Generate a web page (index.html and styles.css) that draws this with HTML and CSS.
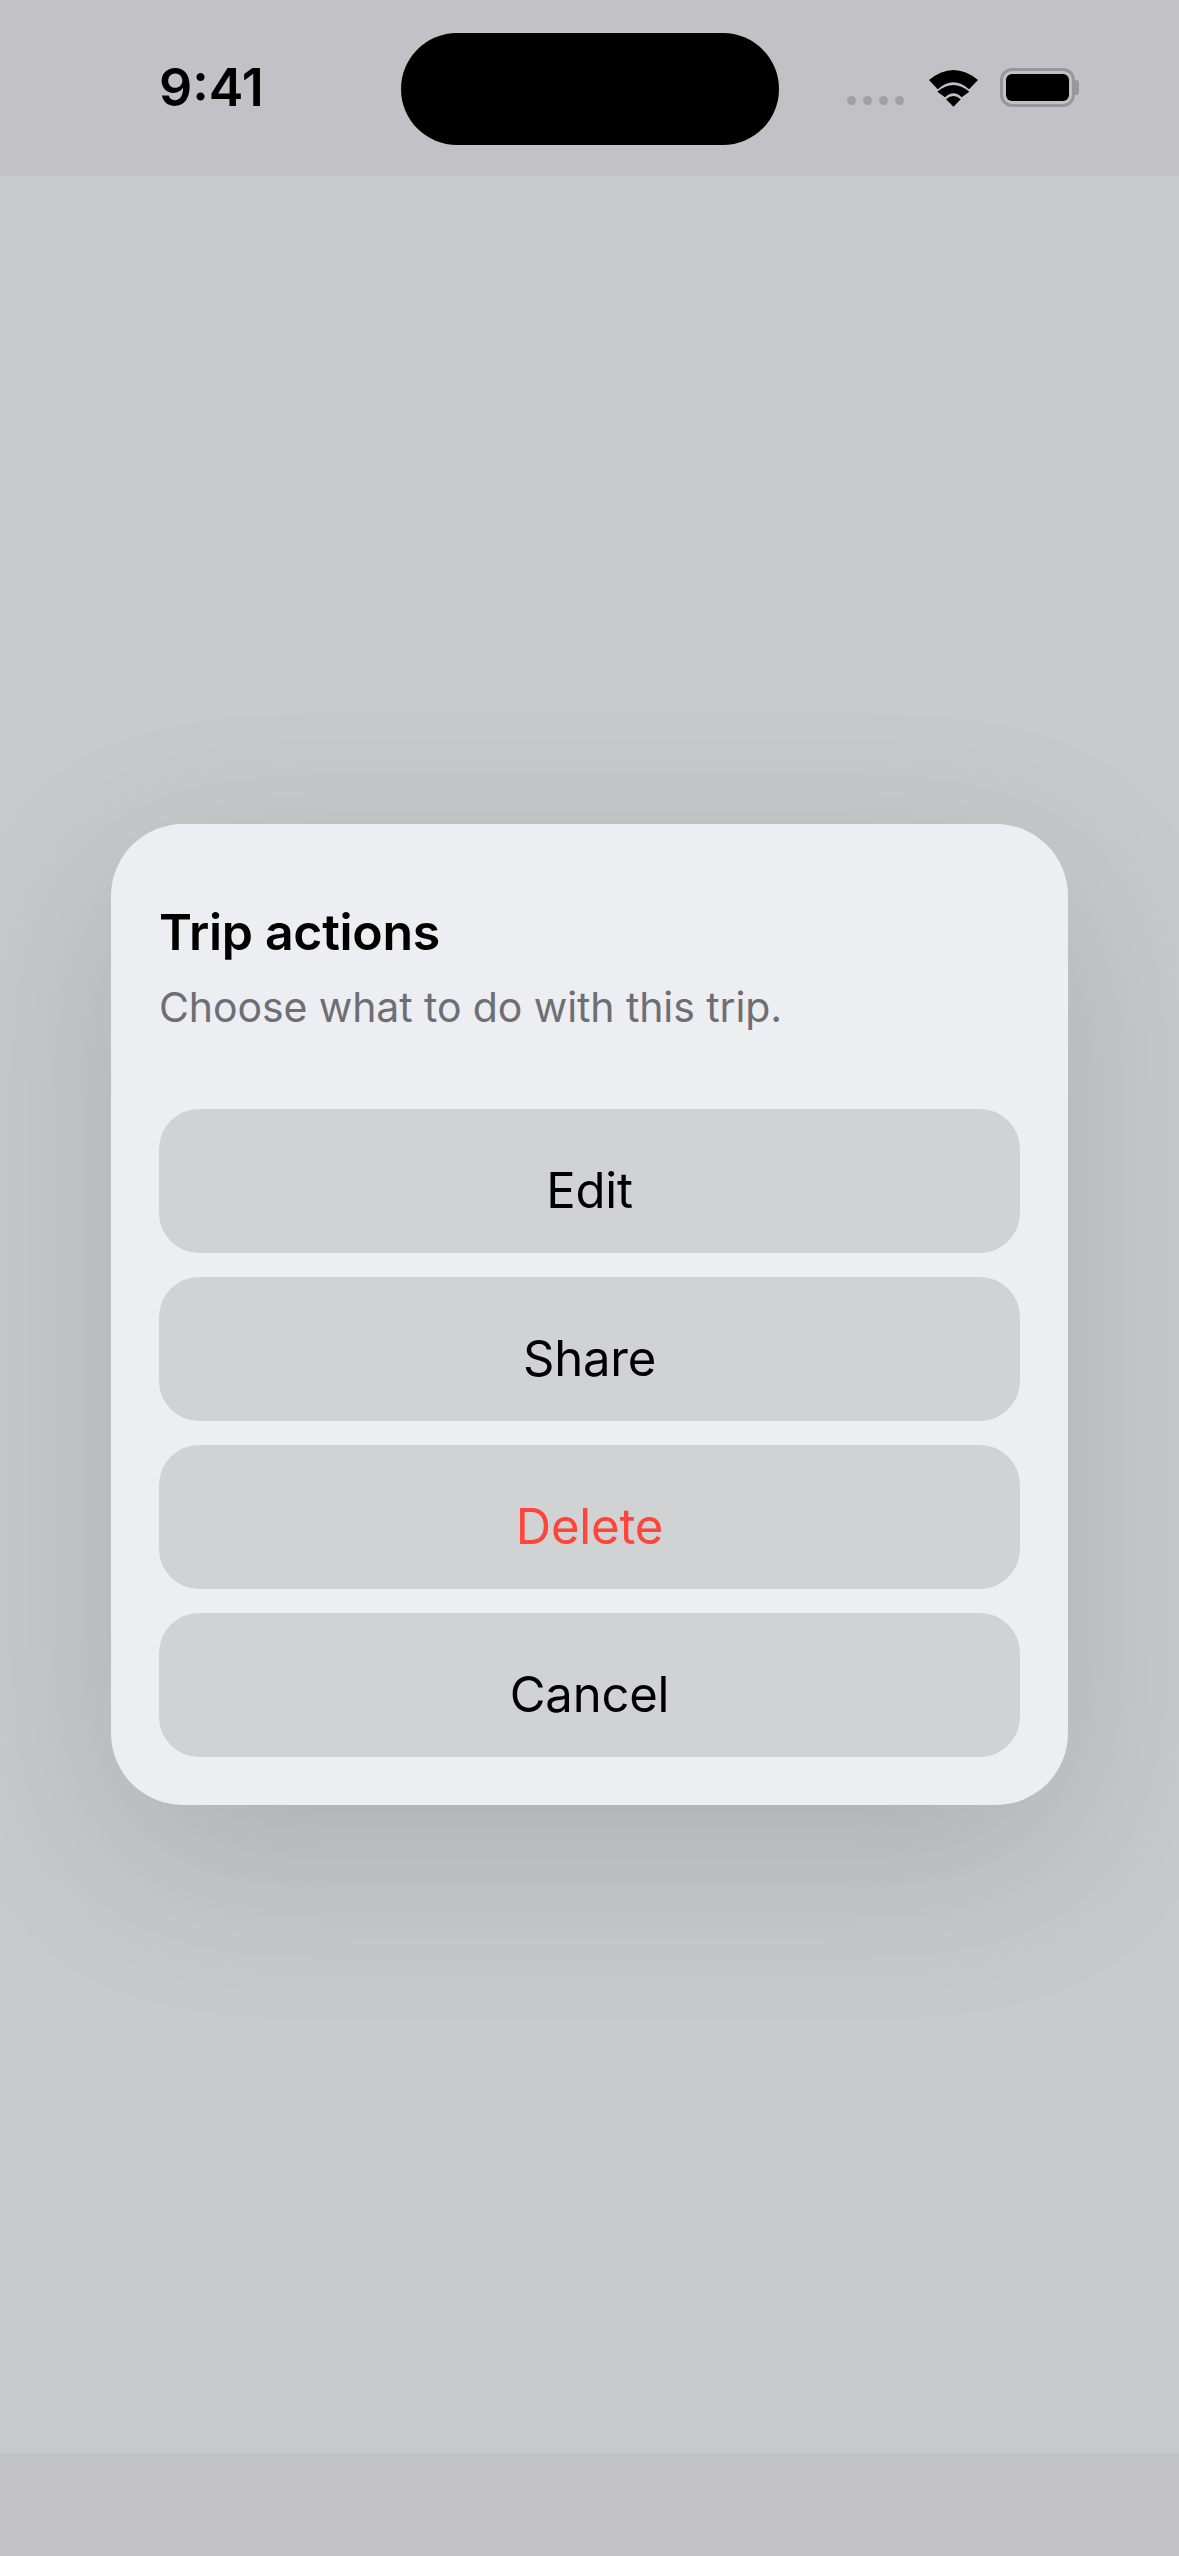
FILE: index.html
```html
<html>
<head><title>Trip actions</title>
<meta name="viewport" content="width=device-width, initial-scale=1.0">
<link rel="stylesheet" href="styles.css">
</head>
<body>
<div class="status">
	<div class="time">9:41</div>
	<div class="island"></div>
	<div class="icons">
		<div class="dots"><span></span><span></span><span></span><span></span></div>
		<svg class="wifi" width="49" height="37" viewBox="0 0 49 37">
			<path d="M0 10 Q24.500 -10 49 10 L40 19.300 Q24.500 5.300 8.700 19.300 Z"/>
			<path d="M8.300 21.700 Q24.500 8.300 40.300 21.700 L32.700 27.300 Q24.500 19.300 16 27.300 Z"/>
			<path d="M17 29.300 Q24.500 22.700 31.700 29.300 L24.500 36.700 Z"/>
		</svg>
		<div class="battery"><div class="charge"></div></div>
		<div class="nub"></div>
	</div>
</div>
<div class="screen">
	<div class="card">
		<div class="card-title">Trip actions</div>
		<div class="card-sub">Choose what to do with this trip.</div>
		<div class="actions">
			<div class="action">Edit</div>
			<div class="action">Share</div>
			<div class="action danger">Delete</div>
			<div class="action">Cancel</div>
		</div>
	</div>
</div>
<div class="home"></div>
</body>
</html>
```

FILE: styles.css
```css
body {
	margin: 0;
	height: 2556px;
	overflow: hidden;
	display: flex;
	flex-direction: column;
	background: #c8c9cb;
	font-family: Inter, "Liberation Sans", sans-serif;
	color: #000;
}
.status {
	height: 176px;
	flex: none;
	display: grid;
	grid-template-columns: 401px 378px 1fr;
	background: #c2c1c6;
}
.time {
	padding: 58px 0 0 159px;
	font-size: 52px;
	line-height: 60px;
	font-weight: 600;
}
.island {
	height: 112px;
	margin-top: 33px;
	border-radius: 56px;
	background: #000;
}
.icons {
	display: flex;
	align-items: flex-start;
	padding: 68px 0 0 68px;
}
.dots {
	display: flex;
	gap: 7px;
	margin-top: 28px;
}
.dots span {
	width: 9px;
	height: 9px;
	border-radius: 50%;
	background: #a0a0a3;
}
.wifi {
	margin: 2px 0 0 25px;
}
.battery {
	width: 75px;
	height: 39px;
	box-sizing: border-box;
	margin-left: 22px;
	padding: 3px;
	border: 3px solid #98989c;
	border-radius: 12px;
}
.charge {
	height: 100%;
	border-radius: 6px;
	background: #000;
}
.nub {
	width: 4px;
	height: 15px;
	margin-top: 12px;
	border-radius: 0 3px 3px 0;
	background: #98989c;
}
.screen {
	flex: 1;
	display: flex;
	align-items: center;
	justify-content: center;
}
.card {
	width: 957px;
	box-sizing: border-box;
	padding: 72px 48px 48px;
	border-radius: 72px;
	background: #edeef2;
	box-shadow: 0 52px 180px rgba(0, 0, 0, 0.13);
}
.card-title {
	height: 72px;
	font-size: 50px;
	line-height: 72px;
	font-weight: 600;
	letter-spacing: -0.3px;
}
.card-sub {
	height: 73px;
	padding-top: 3px;
	font-size: 41px;
	line-height: 73px;
	letter-spacing: -0.1px;
	color: #6e6f75;
}
.actions {
	display: flex;
	flex-direction: column;
	gap: 24px;
	margin-top: 65px;
}
.action {
	height: 144px;
	box-sizing: border-box;
	padding-top: 52px;
	border-radius: 40px;
	background: #d1d2d4;
	font-size: 49px;
	line-height: 60px;
	letter-spacing: -0.2px;
	text-align: center;
}
.danger {
	color: #ff453a;
}
.home {
	height: 103px;
	flex: none;
	background: #c2c1c6;
}
```
